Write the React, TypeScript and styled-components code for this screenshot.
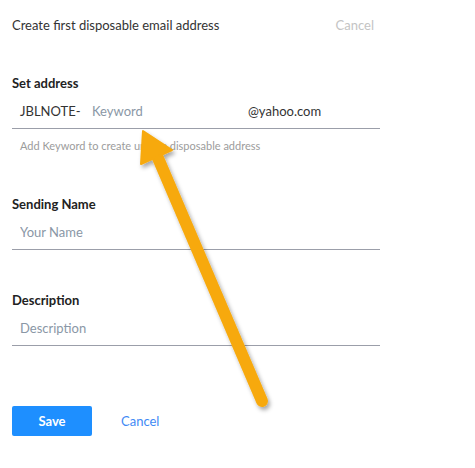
import { createGlobalStyle, styled } from 'styled-components';

const GlobalStyle = createGlobalStyle`
  body {
    margin: 0;
    background: #fff;
    font-family: Lato, 'Noto Sans', sans-serif;
  }
`;

const App = () => {
  return (
    <Page>
      <GlobalStyle />
      <Header>
        <Title>Create first disposable email address</Title>
        <HeaderCancel>Cancel</HeaderCancel>
      </Header>

      <Section $first>
        <Label>Set address</Label>
        <InputRow>
          <Prefix>JBLNOTE-</Prefix>
          <KeywordInput placeholder="Keyword" />
          <Suffix>@yahoo.com</Suffix>
        </InputRow>
        <Hint>Add Keyword to create unique disposable address</Hint>
      </Section>

      <Section>
        <Label>Sending Name</Label>
        <InputRow>
          <TextInput placeholder="Your Name" />
        </InputRow>
      </Section>

      <Section>
        <Label>Description</Label>
        <InputRow>
          <TextInput placeholder="Description" />
        </InputRow>
      </Section>

      <Actions>
        <SaveButton>Save</SaveButton>
        <CancelLink>Cancel</CancelLink>
      </Actions>

      <Arrow width="475" height="468" viewBox="0 0 475 468">
        <defs>
          <filter id="shadow" x="-20%" y="-20%" width="140%" height="140%">
            <feDropShadow dx="2" dy="3" stdDeviation="2" floodColor="#000" floodOpacity="0.35" />
          </filter>
        </defs>
        <g filter="url(#shadow)" fill="#f7a90c" stroke="#f7a90c">
          <line x1="158" y1="158" x2="262" y2="401" strokeWidth="12" strokeLinecap="round" />
          <polygon points="143,131 141,164 172,150" strokeWidth="2" strokeLinejoin="round" />
        </g>
      </Arrow>
    </Page>
  );
};

export default App;

const Page = styled.main`
  position: relative;
  width: 475px;
  height: 468px;
  padding: 0 95px 0 12px;
  box-sizing: border-box;
  overflow: hidden;
`;

const Header = styled.header`
  display: flex;
  justify-content: space-between;
  align-items: center;
  height: 50px;
  padding-right: 6px;
`;

const Title = styled.span`
  font-size: 13px;
  color: #333;
`;

const HeaderCancel = styled.span`
  font-size: 13px;
  color: #c4c4c4;
`;

const Section = styled.section<{ $first?: boolean }>`
  margin-top: ${({ $first }) => ($first ? '23px' : '40px')};
`;

const Label = styled.div`
  font-size: 13px;
  font-weight: 700;
  line-height: 20px;
  color: #222;
`;

const InputRow = styled.div`
  display: flex;
  align-items: center;
  height: 20px;
  padding: 8px 0 7px 8px;
  border-bottom: 1px solid #9b9ea9;
  font-size: 13px;
`;

const Prefix = styled.span`
  width: 72px;
  color: #333;
  line-height: 20px;
`;

const inputBase = `
  border: none;
  outline: none;
  padding: 0;
  background: transparent;
  font-family: inherit;
  font-size: 13px;
  line-height: 20px;
  color: #333;
  &::placeholder {
    color: #8a97a6;
  }
`;

const KeywordInput = styled.input`
  ${inputBase}
  width: 156px;
`;

const Suffix = styled.span`
  color: #333;
  line-height: 20px;
`;

const TextInput = styled.input`
  ${inputBase}
  flex: 1;
`;

const Hint = styled.div`
  margin-top: 9px;
  padding-left: 8px;
  font-size: 11px;
  line-height: 16px;
  color: #9c9c9c;
`;

const Actions = styled.div`
  display: flex;
  align-items: center;
  gap: 29px;
  margin-top: 60px;
`;

const SaveButton = styled.button`
  width: 80px;
  height: 30px;
  border: none;
  border-radius: 2px;
  background: #1e8fff;
  color: #fff;
  font-family: inherit;
  font-size: 13px;
  font-weight: 700;
`;

const CancelLink = styled.span`
  font-size: 13px;
  color: #3f8af5;
`;

const Arrow = styled.svg`
  position: absolute;
  top: 0;
  left: 0;
  pointer-events: none;
`;
